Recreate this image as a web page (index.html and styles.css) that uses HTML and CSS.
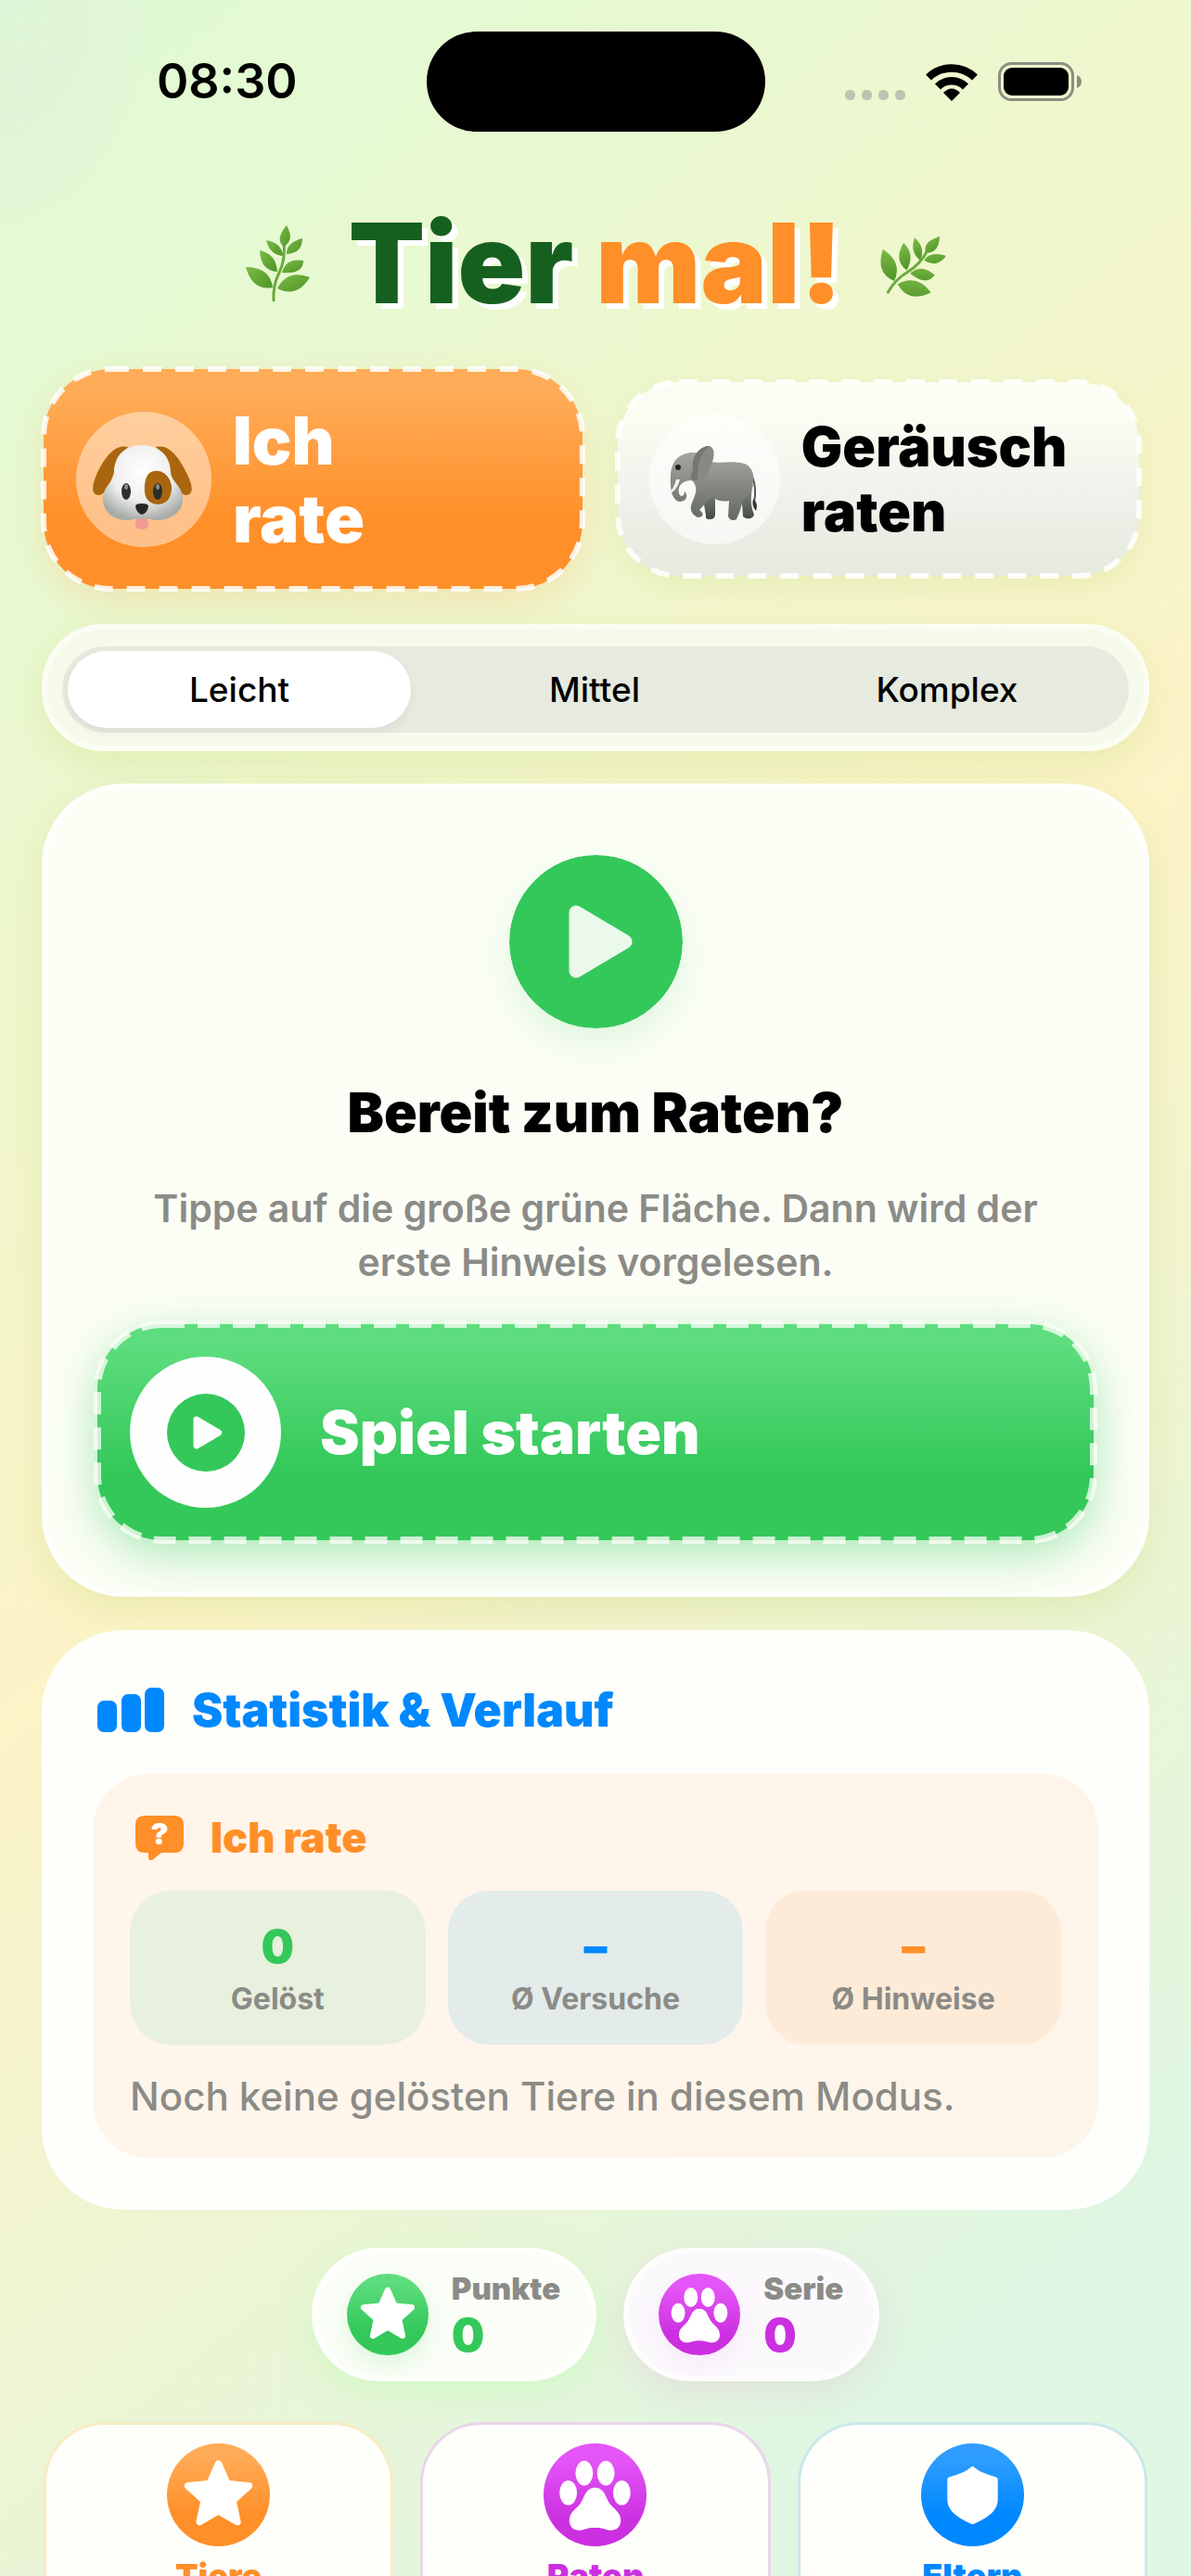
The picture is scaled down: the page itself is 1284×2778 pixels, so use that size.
FILE: index.html
```html
<!DOCTYPE html>
<html lang="de">
<head>
<meta charset="utf-8">
<meta name="viewport" content="width=device-width, initial-scale=1">
<title>Tier mal!</title>
<link rel="stylesheet" href="styles.css">
</head>
<body>
<svg class="defs" width="0" height="0" aria-hidden="true">
  <defs>
    <linearGradient id="leafFill" x1="0" y1="0" x2="1" y2="1"><stop offset="0" stop-color="#7dbb48"/><stop offset="1" stop-color="#4e9426"/></linearGradient>
    <radialGradient id="dogFace" cx=".5" cy=".35" r=".65"><stop offset="0" stop-color="#fff"/><stop offset=".6" stop-color="#eeefee"/><stop offset="1" stop-color="#a9ada9"/></radialGradient>
    <linearGradient id="skin" x1="0" y1="0" x2="0" y2="1"><stop offset="0" stop-color="#a6a6a1"/><stop offset="1" stop-color="#646963"/></linearGradient>
    <linearGradient id="skinDark" x1="0" y1="0" x2="0" y2="1"><stop offset="0" stop-color="#8c8d89"/><stop offset="1" stop-color="#434a44"/></linearGradient>
    <symbol id="sprig" viewBox="0 0 72 84" overflow="visible">
      <path d="M31 82Q30 66 37 52Q44 38 42 18" fill="none" stroke="#6aaa3c" stroke-width="3" stroke-linecap="round"/>
      <g fill="url(#leafFill)">
        <path d="M1 46Q27 46 30 68Q8 72 1 46Z"/>
        <path d="M35 69Q46 48 70 57Q56 80 35 69Z"/>
        <path d="M16 28Q34 32 35 51Q17 50 16 28Z"/>
        <path d="M40 52Q44 36 63 39Q63 54 40 52Z"/>
        <path d="M23 17Q40 20 41 34Q27 33 23 17Z"/>
        <path d="M45 32Q44 20 62 15Q62 31 45 32Z"/>
        <path d="M45 1Q54 17 42 24Q32 16 45 1Z"/>
      </g>
    </symbol>
    <symbol id="star" viewBox="0 0 100 100">
      <path d="M50 20L58.500 39.300L79.500 41.400L63.800 55.500L68.200 76.100L50 65.500L31.800 76.100L36.200 55.500L20.500 41.400L41.500 39.300Z" fill="#fff" stroke="#fff" stroke-width="7" stroke-linejoin="round"/>
    </symbol>
    <symbol id="paw" viewBox="0 0 100 100">
      <g fill="#fff">
        <ellipse cx="39.500" cy="29" rx="8.500" ry="12"/><ellipse cx="60.500" cy="29" rx="8.500" ry="12"/>
        <ellipse cx="24" cy="48" rx="8.500" ry="12"/><ellipse cx="76" cy="48" rx="8.500" ry="12"/>
        <path d="M50 43C41 43 40 52 36 58C32 64 25 66 25 75C25 82 31 86 38 84C44 82 47 82 50 82C53 82 56 82 62 84C69 86 75 82 75 75C75 66 68 64 64 58C60 52 59 43 50 43Z"/>
      </g>
    </symbol>
    <symbol id="shield" viewBox="0 0 100 100">
      <path d="M50 25Q56 31 72 35V55Q72 67 50 76Q28 67 28 55V35Q44 31 50 25Z" fill="#fff" stroke="#fff" stroke-width="5" stroke-linejoin="round"/>
    </symbol>
  </defs>
</svg>

<div class="app">
  <header class="status">
    <time class="clock">08:30</time>
    <span class="island"></span>
    <span class="signals">
      <span class="dots"><i></i><i></i><i></i><i></i></span>
      <svg class="wifi" viewBox="0 0 56 41" aria-label="WLAN"><g fill="none" stroke="#000" stroke-width="8.500"><path d="M3 15.500A36 36 0 0 1 53 15.500"/><path d="M13 25.500A21 21 0 0 1 43 25.500"/></g><path d="M28 41L19 32Q28 23 37 32Z"/></svg>
      <svg class="battery" viewBox="0 0 91 42" aria-label="Batterie"><rect x="1.500" y="1.500" width="79" height="39" rx="13" fill="none" stroke="#8b8f81" stroke-width="3"/><rect x="6" y="6" width="70" height="30" rx="9"/><path d="M85 14Q90 16 90 21Q90 26 85 28Z" fill="#8b8f81"/></svg>
    </span>
  </header>

  <div class="brand">
    <svg class="leaf" aria-hidden="true"><use href="#sprig"/></svg>
    <h1><span class="t-green">Tier</span> <span class="t-orange">mal!</span></h1>
    <svg class="leaf" viewBox="0 0 72 84" aria-hidden="true"><g transform="rotate(33 35 41)"><use href="#sprig" width="72" height="84"/></g></svg>
  </div>

  <main>
    <nav class="modes">
      <button class="mode mode-on" type="button">
        <svg class="dash"><rect width="100%" height="100%" rx="72"/></svg>
        <span class="face">
          <svg viewBox="0 0 146 146" aria-hidden="true">
            <path d="M56 38C42 34 30 50 22 68C16 82 17 90 25 90C34 88 38 74 44 56Z" fill="#a9660f"/>
            <path d="M86 38C100 34 112 50 120 68C127 82 126 90 118 90C109 88 104 74 98 56Z" fill="#a9660f"/>
            <path d="M64 120Q63 127 71 127Q79 127 78 120L77 113H65Z" fill="#f09a93"/>
            <path d="M71 36C52 36 41 48 41 66C41 76 29 80 29 94C29 110 43 118 58 117Q66 114 71 116Q76 114 84 117C100 118 115 110 115 94C115 80 103 76 102 66C102 48 90 36 71 36Z" fill="url(#dogFace)"/>
            <path d="M84 64C96 62 104 74 103 84C102 95 96 100 88 100C76 99 73 91 74 79C75 70 78 65 84 64Z" fill="#a9660f"/>
            <ellipse cx="54" cy="86" rx="5" ry="9" fill="#2c2f2d"/><ellipse cx="88" cy="86" rx="5" ry="9" fill="#2c2f2d"/>
            <ellipse cx="54" cy="81" rx="2" ry="3" fill="#8b8d8b"/><ellipse cx="88" cy="81" rx="2" ry="3" fill="#8b8d8b"/>
            <path d="M64 102Q64 99 71 99Q78 99 78 102Q77 109 71 111Q65 109 64 102Z" fill="#262826"/>
          </svg>
        </span>
        <span class="mode-name">Ich<br>rate</span>
      </button>
      <button class="mode mode-off" type="button">
        <svg class="dash"><rect width="100%" height="100%" rx="66"/></svg>
        <span class="face">
          <svg viewBox="0 0 141 141" aria-hidden="true">
            <path d="M111 68Q116 80 113 96" fill="none" stroke="#555a55" stroke-width="2"/><path d="M112 92Q118 97 115 105Q110 100 112 92Z" fill="#333833"/>
            <path d="M58 84L71 90V109Q71 114 65 114Q60 114 61 110L59 98Z M99 84L112 76Q107 95 113 109Q112 114 104 113L101 111Z" fill="url(#skinDark)"/>
            <path d="M50 42C36 41 24 48 23 66C22 80 24 95 34 95C42 94 41 86 38 84C38 89 34 91 32 86C30 78 36 72 46 72C54 80 49 89 46 96C43 104 46 109 52 112C58 112 60 108 54 104C60 98 64 92 68 90Q76 96 86 94L85 111Q88 117 94 114Q98 106 100 97Q104 90 110 81C116 66 110 54 98 53C88 51 78 54 66 52Z" fill="url(#skin)"/>
            <path d="M47 62C45 46 54 35 65 35C72 38 70 48 66 57C63 68 57 74 49 73C43 72 44 68 47 62Z" fill="#888986"/>
            <path d="M47 62C45 46 54 35 65 35C57 42 51 50 52 72C43 72 44 68 47 62Z" fill="#74766f"/>
            <path d="M33 71Q30 84 20 87Q27 80 29 71Z" fill="#f3f3ec"/><circle cx="31" cy="58" r="3" fill="#222"/>
          </svg>
        </span>
        <span class="mode-name">Geräusch<br>raten</span>
      </button>
    </nav>

    <fieldset class="levels">
      <div class="track">
        <label class="level"><input type="radio" name="level" checked><span>Leicht</span></label>
        <label class="level"><input type="radio" name="level"><span>Mittel</span></label>
        <label class="level"><input type="radio" name="level"><span>Komplex</span></label>
      </div>
    </fieldset>

    <section class="card ready">
      <svg class="play" viewBox="0 0 187 187" aria-hidden="true"><circle cx="93.500" cy="93.500" r="93.500" fill="#34c85a"/><path d="M72 62L125 93.500L72 125Z" fill="#ebf9ec" stroke="#ebf9ec" stroke-width="15" stroke-linejoin="round"/></svg>
      <h2>Bereit zum Raten?</h2>
      <p class="note">Tippe auf die große grüne Fläche. Dann wird der erste Hinweis vorgelesen.</p>
      <button class="start" type="button">
        <svg class="dash"><rect width="100%" height="100%" rx="70"/></svg>
        <span class="disc"><svg viewBox="0 0 187 187" aria-hidden="true"><circle cx="93.500" cy="93.500" r="93.500" fill="#34c85a"/><path d="M71 62L124 93.500L71 125Z" fill="#fff" stroke="#fff" stroke-width="15" stroke-linejoin="round"/></svg></span>
        <span>Spiel starten</span>
      </button>
    </section>

    <section class="card stats">
      <h3 class="stats-title"><svg class="bars" viewBox="0 0 72 48" aria-hidden="true"><g fill="#08f"><rect y="14" width="21" height="34" rx="7"/><rect x="26" y="7" width="21" height="41" rx="7"/><rect x="51" width="21" height="48" rx="7"/></g></svg>Statistik &amp; Verlauf</h3>
      <div class="panel">
        <h4 class="panel-title"><svg class="bubble" viewBox="0 0 52 48" aria-hidden="true"><path d="M10 0H42Q52 0 52 10V30Q52 40 42 40H28L18 48Q14 49 14 45V40H10Q0 40 0 30V10Q0 0 10 0Z" fill="#ff8f28"/><text x="26" y="31" text-anchor="middle" class="mark">?</text></svg>Ich rate</h4>
        <div class="tiles">
          <div class="tile tile-green"><b>0</b><span>Gelöst</span></div>
          <div class="tile tile-blue"><b>–</b><span>Ø Versuche</span></div>
          <div class="tile tile-orange"><b>–</b><span>Ø Hinweise</span></div>
        </div>
        <p class="empty">Noch keine gelösten Tiere in diesem Modus.</p>
      </div>
    </section>

    <div class="scores">
      <div class="score score-green"><svg class="badge green" aria-hidden="true"><use href="#star"/></svg><div><span>Punkte</span><b>0</b></div></div>
      <div class="score score-purple"><svg class="badge purple" aria-hidden="true"><use href="#paw"/></svg><div><span>Serie</span><b>0</b></div></div>
    </div>

    <nav class="tabs">
      <a class="tab tab-orange" href="#tiere"><svg class="badge orange" aria-hidden="true"><use href="#star"/></svg>Tiere</a>
      <a class="tab tab-purple" href="#raten"><svg class="badge purple" aria-hidden="true"><use href="#paw"/></svg>Raten</a>
      <a class="tab tab-blue" href="#eltern"><svg class="badge blue" aria-hidden="true"><use href="#shield"/></svg>Eltern</a>
    </nav>
  </main>
</div>
</body>
</html>
```
FILE: styles.css
```css
* { box-sizing: border-box; }

body {
  margin: 0;
  font-family: Inter, "Liberation Sans", sans-serif;
  color: #000;
}

h1, h2, h3, h4, p { margin: 0; }
button { font: inherit; border: 0; text-align: left; cursor: pointer; }
svg { display: block; flex: none; }
.defs { position: absolute; }

.app {
  height: 100vh;
  overflow: hidden;
  background:
    radial-gradient(ellipse 158px 240px at 0 0, rgba(222, 236, 224, .3) 0 60%, rgba(222, 236, 224, .12) 99%, transparent),
    linear-gradient(141deg, #e0fad4 0%, #e4fad3 10%, #fcf3c7 49%, #ecf5d4 70%, #dff6e2 88%, #dff6e2 100%);
}

/* status bar */
.status {
  display: grid;
  grid-template-columns: 1fr 365px 1fr;
  align-items: center;
  height: 176px;
}
.clock { padding-left: 30px; text-align: center; font-size: 52px; font-weight: 600; line-height: 60px; }
.island { height: 108px; border-radius: 54px; background: #000; }
.signals { display: flex; align-items: center; gap: 22px; padding-left: 86px; }
.dots { display: flex; gap: 7px; padding-top: 28px; }
.dots i { width: 11px; height: 11px; border-radius: 5px; background: #bdc3b2; }
.wifi { width: 56px; height: 41px; }
.battery { width: 91px; height: 42px; }

/* title */
.brand {
  display: flex;
  justify-content: center;
  align-items: center;
  gap: 40px;
  height: 216px;
  margin-bottom: 6px;
}
.leaf { width: 72px; height: 84px; overflow: visible; }
h1 {
  font-size: 120px;
  font-weight: 900;
  line-height: 140px;
  text-shadow: 6px 6px 0 #fff;
}
.t-green { color: #16601f; }
.t-orange { color: #ff8f28; }

main { padding: 0 45px; }

/* mode buttons */
.modes { display: flex; align-items: center; gap: 38px; padding: 0 11px 0 2px; }
.mode { position: relative; display: flex; align-items: center; font-weight: 900; }
.dash {
  position: absolute;
  inset: 0;
  width: 100%;
  height: 100%;
  overflow: visible;
  fill: none;
  stroke: rgba(255, 255, 255, .85);
  stroke-width: 6px;
  stroke-dasharray: 20 15;
}
.mode-on {
  flex: 581;
  gap: 23px;
  height: 237px;
  padding: 0 35px;
  border-radius: 72px;
  color: #fff;
  font-size: 71px;
  line-height: 84px;
  background: linear-gradient(#ffac58 10%, #ff8f28 70%);
  box-shadow: 0 12px 36px rgba(255, 150, 50, .2);
}
.mode-off {
  flex: 562;
  gap: 23px;
  height: 209px;
  padding: 0 34px;
  border-radius: 66px;
  color: #000;
  font-size: 59px;
  line-height: 70px;
  background: linear-gradient(#fafef2 15%, #f1f2ec 55%, #e5e9de 100%);
  box-shadow: 0 10px 30px rgba(180, 200, 80, .18);
}
.face { flex: none; width: 146px; height: 146px; border-radius: 50%; background: rgba(255, 255, 255, .45); }
.mode-off .face { width: 141px; height: 141px; background: rgba(255, 255, 255, .6); }

/* level picker */
.levels {
  margin: 38px 0 0;
  padding: 18px 16px 14px;
  border: 6px solid rgba(255, 255, 255, .5);
  border-radius: 66px;
  background: #f6faea;
  box-shadow: 0 12px 36px rgba(170, 200, 70, .2);
}
.track { display: flex; height: 93px; padding: 5px 6px; border-radius: 47px; background: #e6eadf; }
.level { position: relative; flex: 1; display: flex; justify-content: center; align-items: center; border-radius: 42px; font-size: 37px; font-weight: 500; cursor: pointer; }
.level input { position: absolute; inset: 0; margin: 0; appearance: none; }
.level:has(input:checked) { flex: none; width: 370px; margin-right: 8px; background: #fff; box-shadow: 0 4px 12px rgba(0, 0, 0, .06); }

/* cards */
.card {
  border: 6px solid rgba(255, 255, 255, .7);
  border-radius: 88px;
  background: #fcfef6;
  box-shadow: 0 14px 40px rgba(170, 200, 70, .2);
}
.ready { margin-top: 35px; padding: 71px 54px 55px; display: flex; flex-direction: column; align-items: center; }
.play { width: 187px; height: 187px; border-radius: 50%; box-shadow: 0 16px 40px rgba(52, 200, 90, .14); }
h2 { margin-top: 56px; font-size: 59px; font-weight: 900; line-height: 70px; }
.note { margin-top: 39px; padding: 0 42px; color: #8b8b87; font-size: 41px; font-weight: 600; line-height: 58px; text-align: center; }
.start {
  position: relative;
  align-self: stretch;
  display: flex;
  align-items: center;
  gap: 42px;
  height: 233px;
  margin-top: 38px;
  padding: 0 35px;
  border-radius: 70px;
  color: #fff;
  font-size: 64px;
  font-weight: 900;
  background: linear-gradient(#5ddd7e 10%, #34c85a 68%);
  box-shadow: 0 14px 50px rgba(52, 200, 90, .42);
}
.start .dash { stroke-width: 8px; stroke-dasharray: 24 14; stroke: rgba(250, 254, 246, .78); }
.disc { flex: none; display: grid; place-items: center; width: 163px; height: 163px; border-radius: 50%; background: #fefefe; }
.disc svg { width: 84px; height: 84px; }

/* statistics */
.stats { margin-top: 36px; padding: 50px 49px; background: #fefffa; box-shadow: none; }
.stats-title { display: flex; align-items: center; gap: 30px; padding-left: 5px; color: #08f; font-size: 50px; font-weight: 900; line-height: 60px; }
.bars { width: 72px; height: 48px; }
.panel { margin-top: 39px; padding: 42px 40px 41px; border-radius: 60px; background: linear-gradient(135deg, #fff5ea 60%, #fcf5ea); }
.panel-title { display: flex; align-items: center; gap: 29px; padding-left: 6px; color: #ff8f28; font-size: 45px; font-weight: 900; line-height: 54px; }
.bubble { width: 52px; height: 48px; }
.mark { fill: #fff; font-size: 32px; font-weight: 900; }
.tiles { display: grid; grid-template-columns: repeat(3, 1fr); gap: 24px; margin-top: 30px; }
.tile { display: flex; flex-direction: column; align-items: center; gap: 14px; height: 166px; padding-top: 35px; border-radius: 44px; }
.tile b { font-size: 50px; font-weight: 900; line-height: 50px; }
.tile span { color: #8b8b87; font-size: 32px; font-weight: 700; line-height: 36px; }
.tile-green { background: #e8f1dd; }
.tile-green b { color: #34c85a; }
.tile-blue { background: #e3ebeb; }
.tile-blue b { color: #08f; }
.tile-orange { background: #fdebd8; }
.tile-orange b { color: #ff8f28; }
.empty { margin-top: 31px; color: #8b8b87; font-size: 42px; font-weight: 500; line-height: 50px; }

/* scores */
.scores { display: flex; justify-content: center; gap: 29px; margin-top: 41px; }
.score { display: flex; align-items: center; gap: 25px; height: 144px; padding: 0 33px 0 32px; border: 6px solid rgba(255, 255, 255, .65); border-radius: 72px; }
.score div { display: flex; flex-direction: column; gap: 7px; }
.score span { color: #8b8b87; font-size: 33px; font-weight: 900; line-height: 36px; }
.score b { font-size: 50px; font-weight: 900; line-height: 50px; }
.score-green { background: #fbfef7; box-shadow: 0 12px 36px rgba(180, 255, 170, .4); }
.score-green b { color: #34c85a; }
.score-purple { background: #fbf9fc; box-shadow: 0 12px 36px rgba(220, 180, 210, .28); }
.score-purple b { color: #cb30e0; }

.badge { width: 88px; height: 88px; border-radius: 50%; }
.green { background: linear-gradient(#5ddd7e 10%, #34c85a 70%); box-shadow: 0 10px 26px rgba(52, 200, 90, .15); }
.purple { background: linear-gradient(#e455f7 15%, #cb30e0 75%); box-shadow: 0 10px 26px rgba(203, 48, 224, .08); }
.orange { background: linear-gradient(#ffac58 10%, #ff8f28 70%); }
.blue { background: linear-gradient(#2e9dff 15%, #08f 70%); }

/* bottom navigation */
.tabs { display: grid; grid-template-columns: repeat(3, 1fr); gap: 29px; margin-top: 44px; padding: 0 2px; }
.tab {
  display: flex;
  flex-direction: column;
  align-items: center;
  gap: 10px;
  padding: 20px 0 36px;
  border: 3px solid;
  border-radius: 66px;
  background: #fefffb;
  font-size: 36px;
  font-weight: 900;
  line-height: 44px;
  text-decoration: none;
}
.tab .badge { width: 111px; height: 111px; box-shadow: none; }
.tab-orange { color: #ff8f28; border-color: #f8ecc4; }
.tab-purple { color: #cb30e0; border-color: #ead5ea; }
.tab-blue { color: #08f; border-color: #cbe8ea; }
```
